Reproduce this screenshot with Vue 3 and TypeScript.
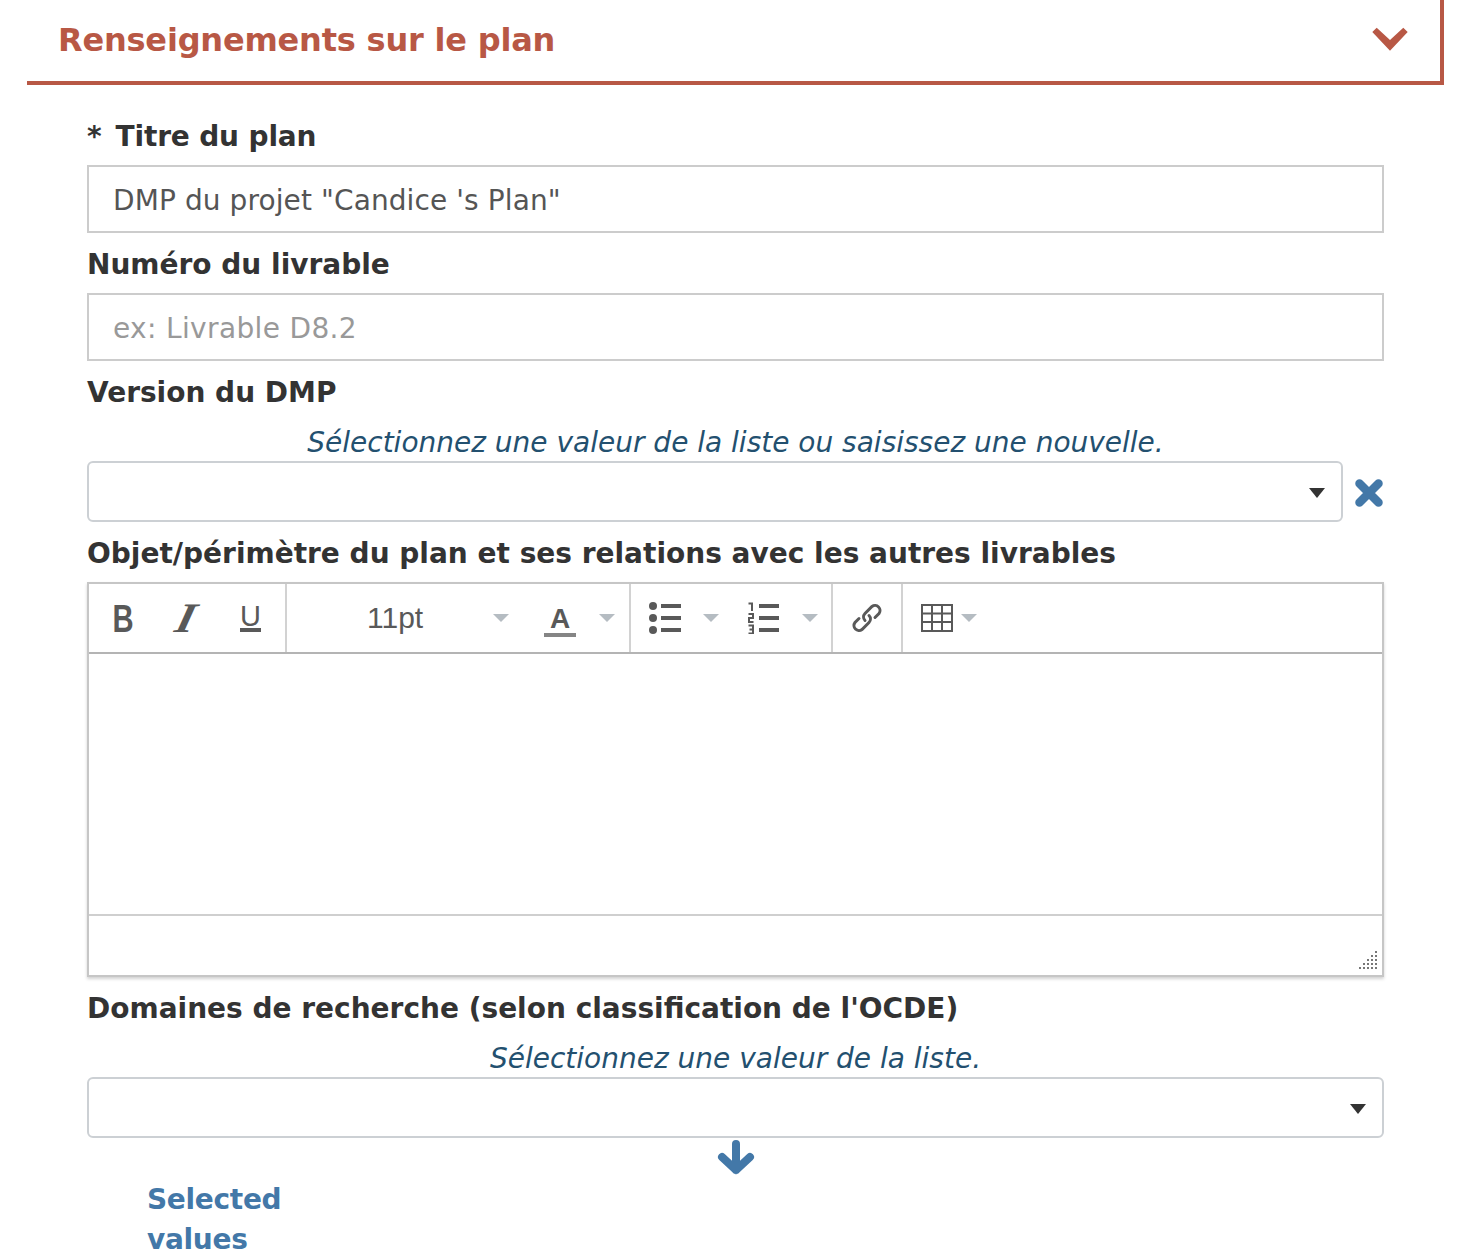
<script setup lang="ts">
const gripDots: string[] = []
for (let row = 0; row < 5; row++) {
  for (let col = 4 - row; col < 5; col++) {
    gripDots.push(`${col * 4},${row * 4}`)
  }
}
</script>

<template>
  <div class="page">
    <header class="section-head">
      <h2>Renseignements sur le plan</h2>
      <svg class="chevron" width="36" height="24" viewBox="0 0 36 24"><path d="M0.300 5 4.700 0.700 18 13 31.300 0.700 35.700 5 18 23.700Z" fill="#b85845" /></svg>
    </header>
    <form class="form" @submit.prevent>
      <label class="label first"><span class="req">*</span>Titre du plan</label>
      <input class="text" value="DMP du projet &quot;Candice 's Plan&quot;" />
      <label class="label second">Numéro du livrable</label>
      <input class="text" placeholder="ex: Livrable D8.2" />
      <label class="label second">Version du DMP</label>
      <p class="hint hint-a">Sélectionnez une valeur de la liste ou saisissez une nouvelle.</p>
      <div class="select-row">
        <div class="select"><span class="arrow"></span></div>
        <svg class="cross" width="28" height="28" viewBox="0 0 28 28"><path d="M4.500 4.500 23.500 23.500M23.500 4.500 4.500 23.500" stroke="#4378a8" stroke-width="8.500" stroke-linecap="round" /></svg>
      </div>
      <label class="label third">Objet/périmètre du plan et ses relations avec les autres livrables</label>

      <div class="editor">
        <div class="toolbar">
          <div class="group g1">
            <span class="t-b">B</span>
            <span class="t-i">I</span>
            <span class="t-u">U</span>
          </div>
          <div class="group g2">
            <span class="t-size">11pt</span>
            <span class="caret c-size"></span>
            <span class="t-a">A</span>
            <span class="caret c-a"></span>
          </div>
          <div class="group g3">
            <svg width="32" height="32" viewBox="0 0 32 32" class="ic-list"><g fill="#595959"><circle cx="4" cy="4" r="4"/><circle cx="4" cy="16" r="4"/><circle cx="4" cy="28" r="4"/><rect x="12" y="2" width="20" height="4"/><rect x="12" y="14" width="20" height="4"/><rect x="12" y="26" width="20" height="4"/></g></svg>
            <span class="caret c-l1"></span>
            <svg width="32" height="32" viewBox="0 0 32 32" class="ic-num"><g fill="none" stroke="#595959" stroke-width="2"><path d="M0.500 1.500H4V9"/><path d="M0.500 12H5V16H1V20H5.500"/><path d="M0.500 23.500H5V27.500H1.500M5 27.500V31.500H0.500"/></g><g fill="#595959"><rect x="11" y="2" width="20" height="4"/><rect x="11" y="14" width="20" height="4"/><rect x="11" y="26" width="20" height="4"/></g></svg>
            <span class="caret c-l2"></span>
          </div>
          <div class="group g4">
            <svg width="32" height="32" viewBox="0 0 32 32"><g fill="none" stroke="#595959" stroke-width="3" stroke-linecap="round"><path d="M14 18.500a5 5 0 0 1 0-7l7-7a5 5 0 0 1 7 7l-4 4"/><path d="M18 13.500a5 5 0 0 1 0 7l-7 7a5 5 0 0 1-7-7l4-4"/></g></svg>
          </div>
          <div class="group g5">
            <svg width="32" height="28" viewBox="0 0 32 28"><path d="M1 1H31V27H1ZM1 9.500H31M1 18H31M11 1V27M21 1V27" fill="none" stroke="#595959" stroke-width="2"/></svg>
            <span class="caret c-t"></span>
          </div>
        </div>
        <div class="edit-area"></div>
        <div class="status">
          <svg class="grip" width="20" height="20" viewBox="0 0 20 20"><g fill="#777"><rect v-for="d in gripDots" :key="d" :x="d.split(',')[0]" :y="d.split(',')[1]" width="2" height="2"/></g></svg>
        </div>
      </div>

      <label class="label fourth">Domaines de recherche (selon classification de l'OCDE)</label>
      <p class="hint hint-b">Sélectionnez une valeur de la liste.</p>
      <div class="select wide"><span class="arrow"></span></div>
      <svg class="down" width="38" height="36" viewBox="0 0 38 36"><path d="M19 4V30M5 17 19 30 33 17" fill="none" stroke="#4378a8" stroke-width="8" stroke-linecap="round" stroke-linejoin="round"/></svg>
      <div class="selected"><span>Selected</span><span>values</span></div>
    </form>
  </div>
</template>

<style>
html, body { margin: 0; background: #fff; }
</style>

<style scoped>
.page {
  box-sizing: border-box;
  width: 1472px;
  height: 1250px;
  overflow: hidden;
  padding: 0 28px 0 27px;
  font-family: "DejaVu Sans", sans-serif;
  color: #333;
}
.section-head {
  box-sizing: border-box;
  height: 85px;
  border-right: 4px solid #b85845;
  border-bottom: 4px solid #b85845;
  padding: 0 32px 0 31px;
  display: flex;
  align-items: center;
  justify-content: space-between;
}
.section-head h2 {
  margin: 0;
  font-size: 32px;
  letter-spacing: -0.2px;
  font-weight: 700;
  color: #b85845;
  position: relative;
  top: -1px;
}
.chevron { margin-top: -3px; }
.form {
  display: flex;
  flex-direction: column;
  margin: 0 60px;
}
.label {
  display: block;
  font-weight: 700;
  font-size: 28px;
  line-height: 40px;
  color: #333;
}
.req { margin-right: 14px; }
.first { margin-top: 32px; margin-bottom: 8px; letter-spacing: -0.15px; }
.second { margin-top: 12px; margin-bottom: 8px; }
.third { margin-top: 12px; margin-bottom: 8px; }
.fourth { margin-top: 12px; }
.text {
  box-sizing: border-box;
  height: 68px;
  width: 100%;
  border: 2px solid #ccc;
  padding: 2px 24px 0;
  font: inherit;
  font-size: 28px;
  letter-spacing: 0.1px;
  color: #555;
  outline: none;
  border-radius: 0;
  background: #fff;
}
.text::placeholder { color: #999; opacity: 1; letter-spacing: 0.35px; }
.hint {
  text-align: center;
  font-style: italic;
  font-size: 28px;
  line-height: 40px;
  color: #23506f;
}
.hint-a { margin: 2px 0 -2px; }
.hint-b { margin: 10px 0 -2px; }
.select-row {
  display: flex;
  align-items: center;
  gap: 11px;
}
.select {
  box-sizing: border-box;
  flex: 1;
  height: 61px;
  border: 2px solid #ccd0d4;
  border-radius: 6px;
  display: flex;
  align-items: center;
  justify-content: flex-end;
  padding-right: 16px;
  background: #fff;
}
.wide { flex: none; width: 100%; }
.arrow {
  width: 0;
  height: 0;
  margin-top: 2px;
  border-left: 8px solid transparent;
  border-right: 8px solid transparent;
  border-top: 10px solid #333;
}
.cross { flex: none; margin: 3px 1px 0; }
.editor {
  box-sizing: border-box;
  height: 395px;
  border: 2px solid #c6c6c6;
  box-shadow: 0 2px 3px rgba(0, 0, 0, 0.18);
  display: flex;
  flex-direction: column;
}
.toolbar {
  flex: none;
  box-sizing: border-box;
  height: 70px;
  border-bottom: 2px solid #b4b4b4;
  display: flex;
  align-items: stretch;
}
.group {
  box-sizing: border-box;
  display: flex;
  align-items: center;
  border-right: 2px solid #d2d2d2;
  color: #595959;
  font-family: "Liberation Sans", sans-serif;
}
.g1 { width: 198px; }
.g2 { width: 344px; }
.g3 { width: 202px; padding-left: 18px; }
.g4 { width: 70px; padding-left: 18px; }
.g5 { flex: 1; border-right: 0; padding-left: 18px; }
.t-b {
  font-weight: 700;
  font-size: 39px;
  line-height: 1;
  margin-left: 20px;
  width: 28px;
  transform: scaleX(0.75);
  transform-origin: center;
}
.t-i {
  font-family: "Liberation Serif", serif;
  font-style: italic;
  font-size: 42px;
  line-height: 1;
  margin-left: 41px;
  width: 16px;
  transform: skewX(-14deg) scaleX(1.15);
  font-weight: 700;
}
.t-u {
  font-size: 29px;
  line-height: 24px;
  margin-left: 46px;
  height: 28px;
  box-sizing: border-box;
  border-bottom: 4px solid #595959;
  width: 21px;
  display: flex;
  justify-content: center;
  margin-top: 0;
}
.t-size {
  font-size: 30px;
  margin-left: 80px;
  width: 56px;
  line-height: 1;
}
.caret {
  width: 0;
  height: 0;
  border-left: 8px solid transparent;
  border-right: 8px solid transparent;
  border-top: 8px solid #b5bcc2;
  flex: none;
}
.c-size { margin-left: 70px; }
.t-a {
  font-size: 28px;
  font-weight: 700;
  line-height: 28px;
  box-sizing: border-box;
  width: 32px;
  height: 32px;
  margin-left: 35px;
  text-align: center;
  border-bottom: 4px solid #858585;
  margin-top: 6px;
}
.c-a { margin-left: 23px; }
.c-l1 { margin-left: 22px; }
.ic-num { margin-left: 29px; }
.c-l2 { margin-left: 22px; }
.c-t { margin-left: 8px; }
.edit-area {
  flex: none;
  height: 260px;
  box-sizing: border-box;
  background: #fff;
}
.status {
  flex: 1;
  border-top: 2px solid #cfcfcf;
  position: relative;
}
.grip { position: absolute; right: 3px; bottom: 4px; }
.down { align-self: center; margin-top: 2px; }
.selected {
  display: flex;
  flex-direction: column;
  gap: 18px;
  margin-left: 60px;
  margin-top: 13px;
  font-size: 28px;
  letter-spacing: -0.3px;
  font-weight: 700;
  line-height: 22px;
  color: #4378a8;
}
</style>
